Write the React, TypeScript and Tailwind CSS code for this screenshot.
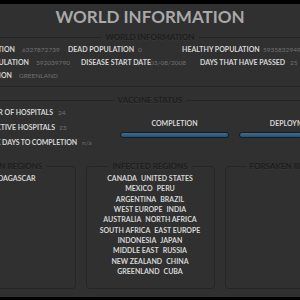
import React from 'react';

const regionRows: Array<[string, string]> = [
  ['CANADA', 'UNITED STATES'],
  ['MEXICO', 'PERU'],
  ['ARGENTINA', 'BRAZIL'],
  ['WEST EUROPE', 'INDIA'],
  ['AUSTRALIA', 'NORTH AFRICA'],
  ['SOUTH AFRICA', 'EAST EUROPE'],
  ['INDONESIA', 'JAPAN'],
  ['MIDDLE EAST', 'RUSSIA'],
  ['NEW ZEALAND', 'CHINA'],
  ['GREENLAND', 'CUBA'],
];

const legendCls =
  'mx-auto px-[4px] text-[8px] leading-[9px] font-bold text-[#1d1d1d] [text-shadow:0_1px_0_#383838] whitespace-nowrap';
const labelCls = 'text-[7px] font-bold text-[#d6d6d6] whitespace-nowrap';
const valueCls = 'text-[6.5px] text-[#707070] whitespace-nowrap';

const Bar = ({ label }: { label: string }) => (
  <div className="w-[109px] flex flex-col items-center">
    <div className={`${labelCls} mt-[13.5px] leading-[9px]`}>{label}</div>
    <div className="mt-[4.5px] w-full h-[6px] rounded-full border border-[#1b1b1b] bg-gradient-to-b from-[#3b6f99] to-[#24506f]" />
  </div>
);

export default function App() {
  return (
    <div className="w-[300px] h-[300px] overflow-hidden bg-[#303030] flex flex-col font-['Lato',sans-serif]">
      <div className="h-[4px] bg-black shrink-0" />
      <div className="flex justify-center">
        <div className="w-[500px] shrink-0 flex flex-col">
          {/* Title */}
          <h1 className="h-[26px] leading-[26px] text-center text-[17px] font-bold text-[#a9a9a9]">
            WORLD INFORMATION
          </h1>

          {/* World information */}
          <fieldset className="mt-[2px] border-t border-b border-[#252525] pt-[1px] pb-[4px]">
            <legend className={`${legendCls} leading-[10px]`}>WORLD INFORMATION</legend>
            <div className="grid grid-cols-[115px_53px_69px_45px_81px_auto] items-baseline leading-[13px]">
              <span className={`${labelCls} text-right`}>WORLD POPULATION</span>
              <span className={`${valueCls} pl-[7px]`}>6327872739</span>
              <span className={labelCls}>DEAD POPULATION</span>
              <span className={`${valueCls} pl-[1px]`}>0</span>
              <span className={labelCls}>HEALTHY POPULATION</span>
              <span className={valueCls}>5935832949</span>
            </div>
            <div className="grid grid-cols-[129px_52px_69px_50px_90px_auto] items-baseline leading-[13px]">
              <span className={`${labelCls} text-right`}>INFECTED POPULATION</span>
              <span className={`${valueCls} pl-[7px]`}>392039790</span>
              <span className={labelCls}>DISEASE START DATE</span>
              <span className={valueCls}>03/08/2008</span>
              <span className={labelCls}>DAYS THAT HAVE PASSED</span>
              <span className={valueCls}>25</span>
            </div>
            <div className="grid grid-cols-[112px_auto] items-baseline leading-[13px]">
              <span className={`${labelCls} text-right`}>LATEST INFECTION</span>
              <span className={`${valueCls} pl-[7px]`}>GREENLAND</span>
            </div>
          </fieldset>

          {/* Vaccine status */}
          <fieldset className="mt-[9px] border-t border-[#252525]">
            <legend className={legendCls}>VACCINE STATUS</legend>
            <div className="flex">
              <div className="w-[220px] flex flex-col">
                <div className="grid grid-cols-[153px_auto] items-baseline leading-[15px]">
                  <span className={`${labelCls} text-right`}>NUMBER OF HOSPITALS</span>
                  <span className={`${valueCls} pl-[5px]`}>24</span>
                </div>
                <div className="grid grid-cols-[155px_auto] items-baseline leading-[15px]">
                  <span className={`${labelCls} text-right`}>ACTIVE HOSPITALS</span>
                  <span className={`${valueCls} pl-[4px]`}>23</span>
                </div>
                <div className="grid grid-cols-[177px_auto] items-baseline leading-[15px]">
                  <span className={`${labelCls} text-right tracking-[-0.1px]`}>ESTIMATE DAYS TO COMPLETION</span>
                  <span className={`${valueCls} pl-[5px]`}>n/a</span>
                </div>
              </div>
              <div className="flex gap-[10px]">
                <Bar label="COMPLETION" />
                <Bar label="DEPLOYMENT" />
              </div>
            </div>
          </fieldset>

          {/* Region boxes */}
          <div className="mt-[12px] flex justify-center gap-[10px]">
            <fieldset className="w-[129px] h-[127px] border border-[#262626] rounded-[4px]">
              <legend className={legendCls}>CLEAN REGIONS</legend>
              <div className="pt-[2px] flex flex-col items-center">
                <span className={`${labelCls} leading-[10.33px]`}>MADAGASCAR</span>
              </div>
            </fieldset>
            <fieldset className="w-[129px] h-[127px] border border-[#262626] rounded-[4px]">
              <legend className={legendCls}>INFECTED REGIONS</legend>
              <div className="pt-[2px] flex flex-col items-center">
                {regionRows.map(([a, b]) => (
                  <div key={a} className={`${labelCls} leading-[10.33px] flex gap-[4px]`}>
                    <span>{a}</span>
                    <span>{b}</span>
                  </div>
                ))}
              </div>
            </fieldset>
            <fieldset className="w-[129px] h-[127px] border border-[#262626] rounded-[4px]">
              <legend className={legendCls}>FORSAKEN REGIONS</legend>
            </fieldset>
          </div>
        </div>
      </div>
      <div className="mt-auto h-[3px] bg-black shrink-0" />
    </div>
  );
}
